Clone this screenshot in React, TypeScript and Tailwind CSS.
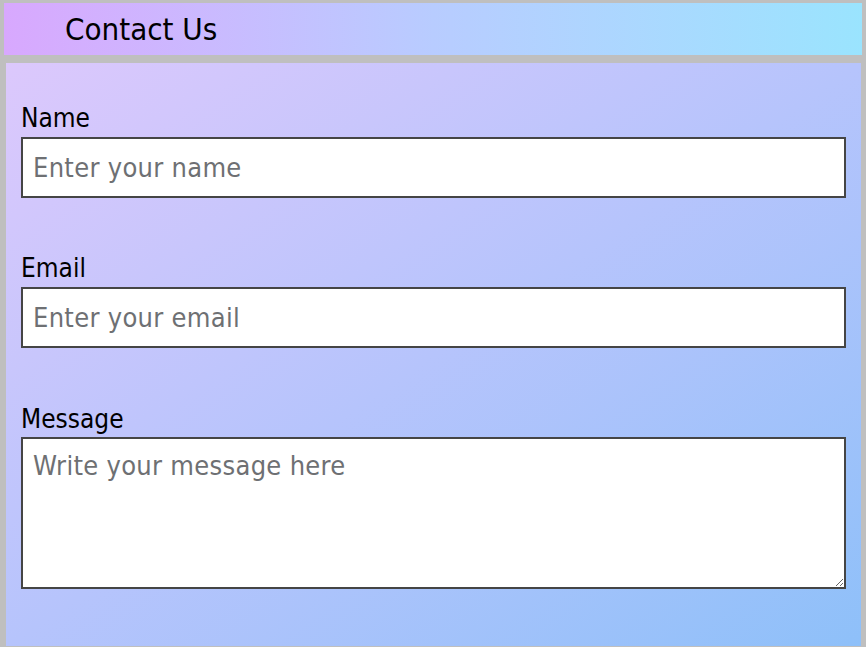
export default function App() {
  const font = "font-['DejaVu_Sans_Condensed','Liberation_Sans',sans-serif]";

  return (
    <div className={`${font} flex h-screen w-full flex-col bg-[#bfbfbf] pt-[3px] pb-[1px]`}>
      <header className="ml-[4px] mr-[4px] flex h-[52px] shrink-0 items-center bg-linear-to-r from-[#d8a8fe] via-[#b8ccff] to-[#9ae4fe] pl-[61px]">
        <h1 className="text-[31px] leading-none text-black">Contact Us</h1>
      </header>

      <form className="ml-[6px] mr-[5px] mt-[8px] flex flex-1 flex-col bg-linear-to-br from-[#dcc8fc] via-[#b6c4fc] to-[#8ec0f9] px-[15px] pt-[40px]">
        <label className="text-[26px] leading-[30px] text-black">Name</label>
        <input
          type="text"
          placeholder="Enter your name"
          className="mt-[4px] h-[61px] w-full border-2 border-[#454545] bg-white px-[10px] text-[27px] tracking-[0.3px] text-black outline-none placeholder:text-[#6e7073]"
        />

        <label className="mt-[55px] text-[26px] leading-[30px] text-black">Email</label>
        <input
          type="email"
          placeholder="Enter your email"
          className="mt-[4px] h-[61px] w-full border-2 border-[#454545] bg-white px-[10px] text-[27px] tracking-[0.3px] text-black outline-none placeholder:text-[#6e7073]"
        />

        <label className="mt-[56px] text-[26px] leading-[30px] text-black">Message</label>
        <textarea
          placeholder="Write your message here"
          className="mt-[3px] h-[152px] w-full resize border-2 border-[#454545] bg-white px-[10px] pt-[8px] text-[27px] leading-[37px] tracking-[0.3px] text-black outline-none placeholder:text-[#6e7073]"
        />
      </form>
    </div>
  );
}
